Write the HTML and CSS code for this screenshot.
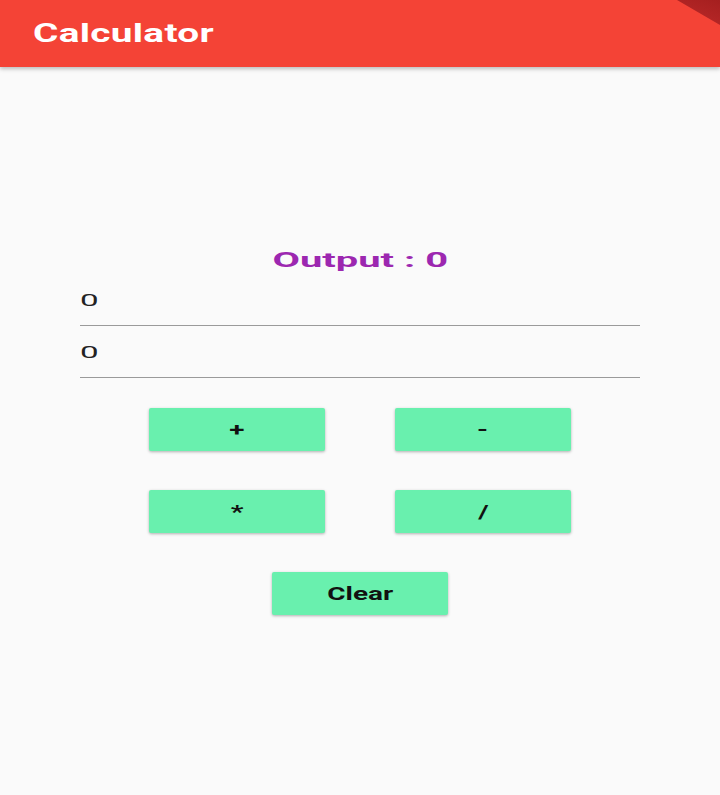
FILE: index.html
```html
<!DOCTYPE html>
<html>
<head>
<meta charset="utf-8">
<title>Calculator</title>
<link rel="stylesheet" href="styles.css">
</head>
<body>
<header class="appbar">
  <span class="title">Calculator</span>
  <div class="banner"></div>
</header>
<main class="main">
  <div class="output"><span class="output-text">Output : 0</span></div>
  <div class="field"><span class="field-text">0</span></div>
  <div class="field"><span class="field-text">0</span></div>
  <div class="row first">
    <button class="btn"><span class="btn-text">+</span></button>
    <button class="btn"><span class="btn-text">-</span></button>
  </div>
  <div class="row">
    <button class="btn"><span class="btn-text">*</span></button>
    <button class="btn"><span class="btn-text">/</span></button>
  </div>
  <div class="row">
    <button class="btn"><span class="btn-text">Clear</span></button>
  </div>
</main>
</body>
</html>
```
FILE: styles.css
```css
html, body {
  margin: 0;
  padding: 0;
  background: #fafafa;
  font-family: Roboto, "Liberation Sans", Arial, sans-serif;
  width: 720px;
  height: 795px;
  overflow: hidden;
}

.appbar {
  position: relative;
  height: 67px;
  background: #f44336;
  display: flex;
  align-items: center;
  padding-left: 33px;
  box-shadow: 0 2px 4px rgba(0,0,0,0.25);
  overflow: hidden;
}

.title {
  display: inline-block;
  color: #fff;
  font-size: 25px;
  font-weight: 700;
  transform: scaleX(1.55);
  transform-origin: left center;
  letter-spacing: 0.2px;
}

.banner {
  position: absolute;
  top: 0;
  right: 0;
  width: 43px;
  height: 25px;
  background: linear-gradient(200deg, #a51f1f, #bd2a2a);
  clip-path: polygon(0 0, 100% 0, 100% 100%);
}

.main {
  padding: 178px 80px 0 80px;
}

.output {
  height: 29px;
  line-height: 30px;
  text-align: center;
}

.output-text {
  display: inline-block;
  color: #9c27b0;
  font-size: 21px;
  font-weight: 700;
  transform: scaleX(1.9);
}

.field {
  height: 35px;
  padding-top: 16px;
  line-height: 20px;
  border-bottom: 1px solid #9a9a9a;
}

.field-text {
  display: inline-block;
  font-size: 17px;
  color: #222;
  transform: scaleX(1.95);
  transform-origin: left center;
}

.row {
  display: flex;
  justify-content: center;
  gap: 70px;
  margin-top: 39px;
}

.row.first {
  margin-top: 30px;
}

.btn {
  width: 176px;
  height: 43px;
  border: none;
  border-radius: 2px;
  background: #69f0ae;
  box-shadow: 0 1px 3px rgba(0,0,0,0.3);
  padding: 0;
  font-family: inherit;
  cursor: pointer;
}

.btn-text {
  display: inline-block;
  font-size: 18px;
  font-weight: 700;
  color: #111;
  transform: scaleX(1.55);
}
```
